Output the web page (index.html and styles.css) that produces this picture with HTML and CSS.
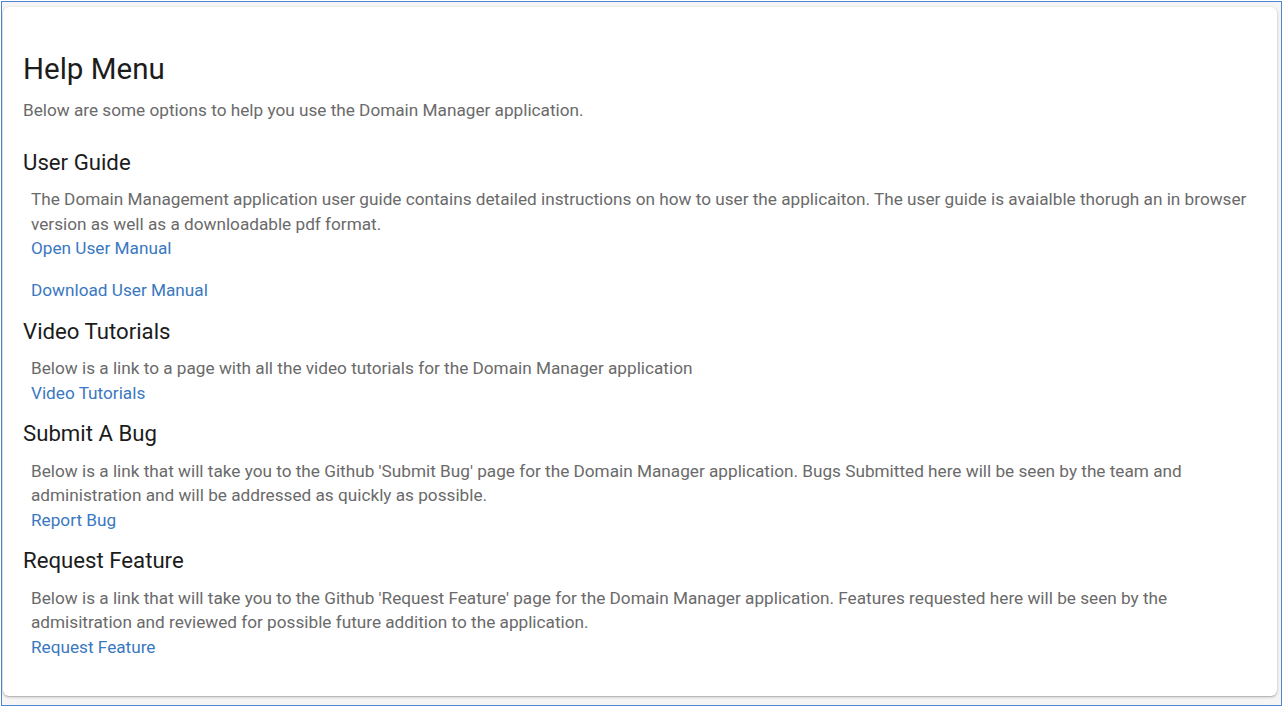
FILE: index.html
```html
<!DOCTYPE html>
<html>
<head>
<meta charset="utf-8">
<link rel="stylesheet" href="styles.css">
</head>
<body>
<div class="frame">
  <div class="card">
    <h1 class="title">Help Menu</h1>
    <p class="intro">Below are some options to help you use the Domain Manager application.</p>

    <section class="section">
      <h2 class="section-title">User Guide</h2>
      <div class="section-body">
        <p class="text">The Domain Management application user guide contains detailed instructions on how to user the applicaiton. The user guide is avaialble thorugh an in browser version as well as a downloadable pdf format.</p>
        <a class="link" href="#">Open User Manual</a>
        <a class="link spaced" href="#">Download User Manual</a>
      </div>
    </section>

    <section class="section">
      <h2 class="section-title">Video Tutorials</h2>
      <div class="section-body">
        <p class="text">Below is a link to a page with all the video tutorials for the Domain Manager application</p>
        <a class="link" href="#">Video Tutorials</a>
      </div>
    </section>

    <section class="section">
      <h2 class="section-title">Submit A Bug</h2>
      <div class="section-body">
        <p class="text">Below is a link that will take you to the Github 'Submit Bug' page for the Domain Manager application. Bugs Submitted here will be seen by the team and administration and will be addressed as quickly as possible.</p>
        <a class="link" href="#">Report Bug</a>
      </div>
    </section>

    <section class="section">
      <h2 class="section-title">Request Feature</h2>
      <div class="section-body">
        <p class="text">Below is a link that will take you to the Github 'Request Feature' page for the Domain Manager application. Features requested here will be seen by the admisitration and reviewed for possible future addition to the application.</p>
        <a class="link" href="#">Request Feature</a>
      </div>
    </section>
  </div>
</div>
</body>
</html>
```

FILE: styles.css
```css
* { box-sizing: border-box; }
html, body { margin: 0; padding: 0; background: #ffffff; }
body { font-family: Roboto, "Liberation Sans", Arial, sans-serif; }

.frame {
  margin: 1px 2px 2px 1px;
  height: 705px;
  border: 1px solid #5284d4;
  background: #f5f5f5;
  padding: 5px 4px 0 1px;
}

.card {
  background: #ffffff;
  border-radius: 6px;
  box-shadow: 0 1px 3px rgba(0,0,0,0.25), 0 1px 1px rgba(0,0,0,0.1);
  height: 689px;
  padding: 46px 20px 0 20px;
}

.title {
  margin: 0 0 13px;
  font-size: 29.5px;
  line-height: 32px;
  font-weight: 400;
  color: #1c1c1c;
}

.intro {
  margin: 0 0 25px;
  font-size: 17.2px;
  line-height: 24.5px;
  color: #6a6a6a;
}

.section { margin-bottom: 14px; }

.section-title {
  margin: 0 0 11.5px;
  font-size: 22.2px;
  line-height: 28px;
  font-weight: 400;
  color: #1c1c1c;
}

.section-body { padding: 0 0 0 8px; }

.text {
  margin: 0;
  font-size: 17.2px;
  line-height: 24.5px;
  color: #6a6a6a;
}

.link {
  display: block;
  width: max-content;
  font-size: 17.2px;
  line-height: 24.5px;
  color: #3a78c0;
  text-decoration: none;
}

.link.spaced { margin-top: 17.5px; }
```
